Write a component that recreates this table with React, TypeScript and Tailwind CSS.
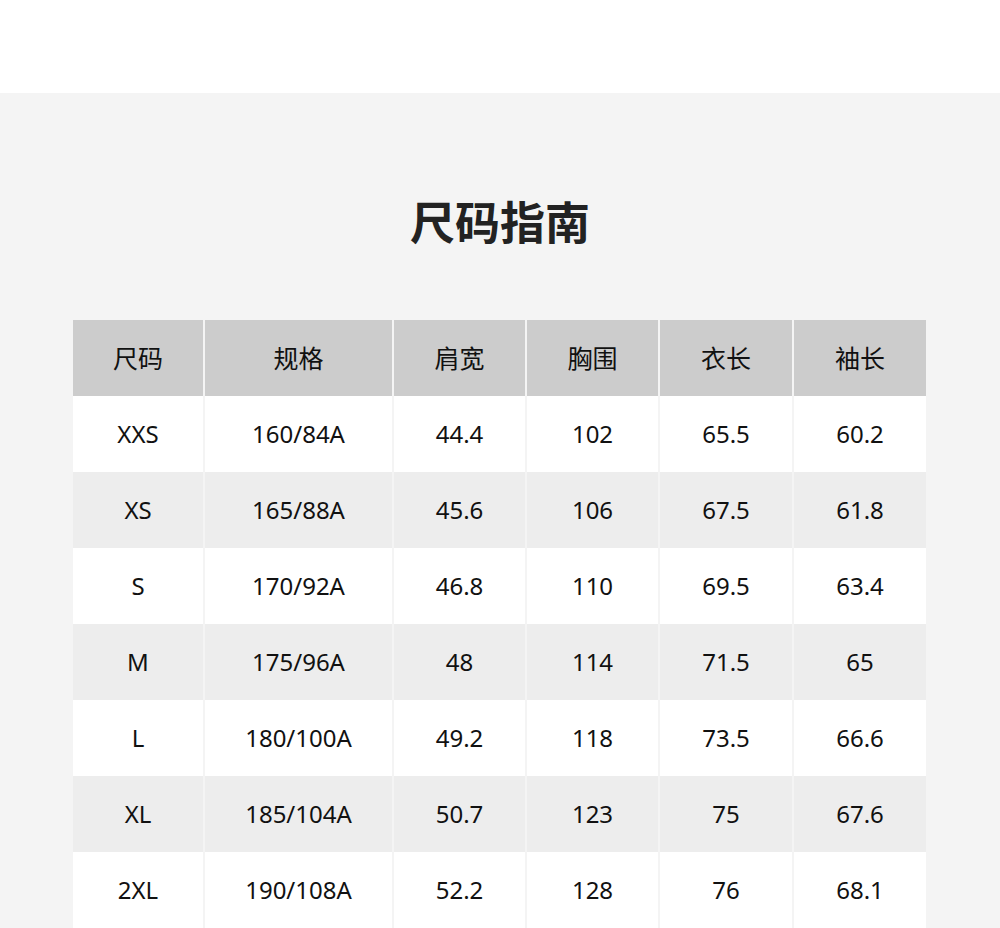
const headers = ["尺码", "规格", "肩宽", "胸围", "衣长", "袖长"];

const rows = [
  ["XXS", "160/84A", "44.4", "102", "65.5", "60.2"],
  ["XS", "165/88A", "45.6", "106", "67.5", "61.8"],
  ["S", "170/92A", "46.8", "110", "69.5", "63.4"],
  ["M", "175/96A", "48", "114", "71.5", "65"],
  ["L", "180/100A", "49.2", "118", "73.5", "66.6"],
  ["XL", "185/104A", "50.7", "123", "75", "67.6"],
  ["2XL", "190/108A", "52.2", "128", "76", "68.1"],
];

const App = () => {
  return (
    <div
      className="min-h-screen w-[1000px] bg-[#f4f4f4]"
      style={{ fontFamily: '"Noto Sans", "Noto Sans CJK SC", sans-serif' }}
    >
      <div className="h-[93px] bg-white" />

      <div className="pt-[100px]">
        <h1
          className="text-center text-[45px] leading-[56px] font-semibold text-[#222]"
          style={{ fontFamily: '"Noto Sans CJK SC", sans-serif' }}
        >
          尺码指南
        </h1>

        {/* 表格 */}
        <div className="mt-[71px] ml-[73px] w-[853px] grid grid-cols-[130px_187px_131px_131px_132px_132px] gap-x-[2px]">
          {headers.map((h) => (
            <div
              key={h}
              className="h-[76px] flex items-center justify-center bg-[#cccccc] text-[25px] text-[#111]"
              style={{ fontFamily: '"Noto Sans CJK SC", sans-serif' }}
            >
              {h}
            </div>
          ))}
          {rows.map((row, i) =>
            row.map((cell, j) => (
              <div
                key={`${i}-${j}`}
                className={`h-[76px] flex items-center justify-center text-[24px] text-[#111] ${
                  i % 2 === 0 ? "bg-white" : "bg-[#ededed]"
                }`}
              >
                {cell}
              </div>
            ))
          )}
        </div>
      </div>
    </div>
  );
};

export default App;
